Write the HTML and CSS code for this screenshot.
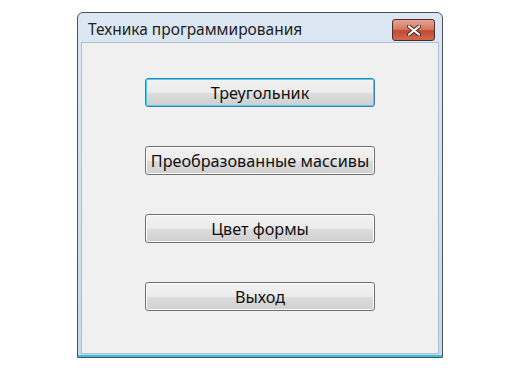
FILE: index.html
```html
<!DOCTYPE html>
<html lang="ru">
<head>
  <meta charset="UTF-8">
  <title>Техника программирования</title>
  <link rel="stylesheet" href="styles.css">
</head>
<body>

  <div class="window">
    <div class="titlebar">
      <span class="title">Техника программирования</span>
      <button class="close-btn" title="Закрыть">
        <svg width="14" height="11" viewBox="0 0 14 11">
          <path d="M2 1.5 L12 9.5 M12 1.5 L2 9.5" stroke="#4a2a24" stroke-width="4" stroke-linecap="round"/>
          <path d="M2 1.5 L12 9.5 M12 1.5 L2 9.5" stroke="#ffffff" stroke-width="2.2" stroke-linecap="round"/>
        </svg>
      </button>
    </div>

    <div class="client">
      <button class="btn btn-default">Треугольник</button>
      <button class="btn">Преобразованные массивы</button>
      <button class="btn">Цвет формы</button>
      <button class="btn">Выход</button>
    </div>
  </div>

</body>
</html>
```

FILE: styles.css
```css
body {
  margin: 0;
  padding: 12px 0 0 77px;
  background: #ffffff;
  font-family: 'Noto Sans', 'Open Sans', sans-serif;
}

.window {
  width: 358px;
  height: 341px;
  border: 1px solid #4c5258;
  border-radius: 6px 6px 0 0;
  background: linear-gradient(to bottom, #dce7f3, #c9d9ea);
  display: flex;
  flex-direction: column;
  padding: 0 3px 3px 3px;
  box-shadow: inset 0 -2px 0 #37c3e0;
}

.titlebar {
  height: 29px;
  display: flex;
  align-items: center;
  justify-content: space-between;
  padding: 0 4px 0 7px;
}

.title {
  font-size: 15.5px;
  color: #1e1e1e;
  margin-top: 3px;
}

.close-btn {
  width: 43px;
  height: 22px;
  margin-top: 5px;
  border: 1px solid #4a2e2a;
  border-radius: 3px;
  background: linear-gradient(to bottom, #e8a493 0%, #d57a66 45%, #c04a30 55%, #cf6a4e 100%);
  display: flex;
  align-items: center;
  justify-content: center;
  padding: 0;
}

.client {
  flex: 1;
  background: #f0f0f0;
  border: 1px solid #a9c0d8;
  display: flex;
  flex-direction: column;
  align-items: center;
  gap: 39px;
  padding-top: 35px;
}

.btn {
  width: 230px;
  height: 29px;
  font-family: 'Noto Sans', 'Open Sans', sans-serif;
  font-size: 16.2px;
  color: #111111;
  border: 1px solid #707070;
  border-radius: 3px;
  background: linear-gradient(to bottom, #f2f2f2 0%, #ebebeb 50%, #dddddd 51%, #cfcfcf 100%);
  box-shadow: inset 0 0 0 1px #fcfcfc;
  padding: 0;
}

.btn-default {
  border-color: #3c7fb1;
  box-shadow: inset 0 0 0 1px #48d0f5;
}
```
